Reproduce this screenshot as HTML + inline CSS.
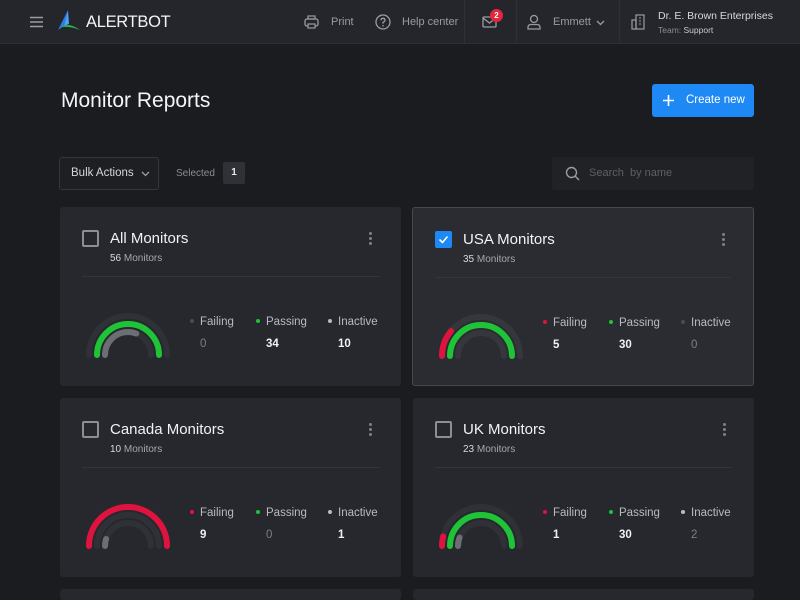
<!DOCTYPE html>
<html><head><meta charset="utf-8"><style>
*{box-sizing:border-box;margin:0;padding:0}
html{width:800px;height:600px;overflow:hidden}
body{width:800px;height:600px;overflow:hidden;background:#1a1c20;font-family:"Liberation Sans",sans-serif;color:#e8e9eb;position:relative}
.hdr{position:absolute;left:0;top:0;width:800px;height:44px;background:#24262b;border-bottom:1px solid #2d2f34}
.abs{position:absolute}
.sep{position:absolute;top:0;width:1px;height:44px;background:#2e3035}
.muted{color:#9a9ca1}
.card{position:absolute;width:341px;height:179px;background:#26282d;border-radius:3px}
.card.sel{border:1px solid #45484e;background:#2a2c31}
.cb{position:absolute;left:22px;top:23px;width:17px;height:17px;border:2px solid #8c8e93;border-radius:2px}
.cb.on{background:#1e88f5;border-color:#1e88f5}
.title{position:absolute;left:50px;top:23px;font-size:15px;color:#f2f3f5}
.sub{position:absolute;left:50px;top:46px;font-size:10px;color:#a6a8ad}
.sub b{color:#d8d9dc;font-weight:normal}
.div{position:absolute;left:22px;right:22px;top:69px;height:1px;background:#33353a}
.dots{position:absolute;right:28px;top:25px;width:3px}
.dots i{display:block;width:3px;height:3px;border-radius:50%;background:#7d8085;margin-bottom:2px}
.g{position:absolute;left:24px;top:92px}
.st{position:absolute;top:109px;font-size:11.5px;color:#b9bbbf}
.st i{display:inline-block;width:4px;height:4px;border-radius:50%;margin-right:6px;vertical-align:middle;position:relative;top:-1px}
.val{position:absolute;top:22px;font-size:11.5px;font-weight:bold;color:#f0f1f3;left:10px}
.val.z{color:#7b7e83;font-weight:normal}
</style></head><body>
<div class="hdr">
<svg class="abs" style="left:30px;top:16px" width="14" height="12"><path d="M0 1.5h13M0 6h13M0 10.5h13" stroke="#9a9ca1" stroke-width="1.5"/></svg>
<svg class="abs" style="left:56px;top:10px" width="26" height="22"><path d="M12 0L2 20 8 16Z" fill="#2a7de1"/><path d="M12 0L8 16 13 14Z" fill="#4da0ff"/><path d="M5 17Q13 12 24 20Q14 16 5 17Z" fill="#2bbf4a"/></svg>
<div class="abs" style="left:86px;top:13px;font-size:16.5px;color:#f4f4f5;letter-spacing:-0.3px">ALERTBOT</div>
<svg class="abs" style="left:304px;top:15px" width="15" height="14"><rect x="1" y="4" width="13" height="7" rx="2" fill="none" stroke="#9a9ca1" stroke-width="1.3"/><rect x="4" y="1" width="7" height="3" fill="none" stroke="#9a9ca1" stroke-width="1.2"/><rect x="4" y="9" width="7" height="4" fill="#24262b" stroke="#9a9ca1" stroke-width="1.2"/></svg>
<div class="abs muted" style="left:331px;top:16px;font-size:11px">Print</div>
<svg class="abs" style="left:375px;top:14px" width="16" height="16"><circle cx="8" cy="8" r="7" fill="none" stroke="#9a9ca1" stroke-width="1.3"/><path d="M6 6.3Q6 4.3 8 4.3T10 6.3Q10 7.5 8 8.3V9.6" fill="none" stroke="#9a9ca1" stroke-width="1.3"/><circle cx="8" cy="11.7" r=".8" fill="#9a9ca1"/></svg>
<div class="abs muted" style="left:402px;top:16px;font-size:11px">Help center</div>
<div class="sep" style="left:464px"></div>
<svg class="abs" style="left:482px;top:16px" width="15" height="12"><rect x="1" y="1" width="13" height="10" rx="1" fill="none" stroke="#9a9ca1" stroke-width="1.3"/><path d="M1 2l6.5 5 6.5-5" fill="none" stroke="#9a9ca1" stroke-width="1.3"/></svg>
<div class="abs" style="left:490px;top:9px;width:13px;height:13px;border-radius:50%;background:#e3263f;font-size:8px;font-weight:bold;text-align:center;line-height:13px;color:#fff">2</div>
<div class="sep" style="left:516px"></div>
<svg class="abs" style="left:527px;top:14px" width="14" height="16"><circle cx="7" cy="5" r="3.5" fill="none" stroke="#9a9ca1" stroke-width="1.3"/><path d="M1 15v-1.5Q1 10.5 4 10.5h6Q13 10.5 13 13.5V15Z" fill="none" stroke="#9a9ca1" stroke-width="1.3"/></svg>
<div class="abs muted" style="left:553px;top:16px;font-size:11px">Emmett</div>
<svg class="abs" style="left:596px;top:20px" width="9" height="6"><path d="M1 1l3.5 3.5L8 1" fill="none" stroke="#9a9ca1" stroke-width="1.3"/></svg>
<div class="sep" style="left:619px"></div>
<svg class="abs" style="left:631px;top:14px" width="14" height="16"><rect x="5" y="1" width="8" height="14" fill="none" stroke="#9a9ca1" stroke-width="1.2"/><rect x="1" y="6" width="4" height="9" fill="none" stroke="#9a9ca1" stroke-width="1.2"/><path d="M8 4h2M8 7h2M8 10h2" stroke="#9a9ca1"/></svg>
<div class="abs" style="left:658px;top:10px;font-size:10.5px;color:#d8d9dc">Dr. E. Brown Enterprises</div>
<div class="abs" style="left:658px;top:25px;font-size:8.5px;color:#8a8c91">Team: <span style="color:#c8c9cc">Support</span></div>
</div>

<div class="abs" style="left:61px;top:89px;font-size:21px;color:#f4f5f6">Monitor Reports</div>
<div class="abs" style="left:652px;top:84px;width:102px;height:33px;background:#1e88f5;border-radius:3px"></div>
<svg class="abs" style="left:662px;top:94px" width="13" height="13"><path d="M6.5 1v11M1 6.5h11" stroke="#fff" stroke-width="1.6"/></svg>
<div class="abs" style="left:686px;top:94px;font-size:11.5px;color:#fff">Create new</div>

<div class="abs" style="left:59px;top:157px;width:100px;height:33px;border:1px solid #34363b;border-radius:3px;background:#1d1f23"></div>
<div class="abs" style="left:71px;top:167px;font-size:11.5px;color:#d6d7da">Bulk Actions</div>
<svg class="abs" style="left:141px;top:171px" width="9" height="6"><path d="M1 1l3.5 3.5L8 1" fill="none" stroke="#9a9ca1" stroke-width="1.3"/></svg>
<div class="abs" style="left:176px;top:168px;font-size:10px;color:#8a8c91">Selected</div>
<div class="abs" style="left:223px;top:162px;width:22px;height:22px;background:#2f3136;border-radius:2px;font-size:10px;font-weight:bold;text-align:center;line-height:22px">1</div>
<div class="abs" style="left:552px;top:157px;width:202px;height:33px;background:#202226;border-radius:3px"></div>
<svg class="abs" style="left:565px;top:166px" width="15" height="15"><circle cx="6.5" cy="6.5" r="5" fill="none" stroke="#9a9ca1" stroke-width="1.4"/><path d="M10 10l4 4" stroke="#9a9ca1" stroke-width="1.4"/></svg>
<div class="abs" style="left:589px;top:167px;font-size:11px;color:#5d6065">Search&nbsp; by name</div>

<!-- Card 1 -->
<div class="card" style="left:60px;top:207px">
<div class="cb"></div><div class="title">All Monitors</div><div class="sub"><b>56</b> Monitors</div><div class="dots" style="right:29px"><i></i><i></i><i></i></div><div class="div"></div>
<svg class="g" width="90" height="64"><g fill="none" stroke-width="6" stroke-linecap="round">
<path d="M5 56A39 39 0 0 1 83 56" stroke="#2f3136"/><path d="M13 56A31 31 0 0 1 75 56" stroke="#2f3136"/><path d="M21 56A23 23 0 0 1 67 56" stroke="#2f3136"/>
<path d="M13 56A31 31 0 0 1 75 56" stroke="#1ec337" pathLength="100"/>
<path d="M21 56A23 23 0 0 1 67 56" stroke="#6b6e73" pathLength="100" stroke-dasharray="62 200"/></g></svg>
<div class="st" style="left:130px"><i style="background:#4a4c51"></i>Failing<div class="val z">0</div></div>
<div class="st" style="left:196px"><i style="background:#1ec337"></i>Passing<div class="val">34</div></div>
<div class="st" style="left:268px"><i style="background:#b9bbbf"></i>Inactive<div class="val">10</div></div>
</div>

<!-- Card 2 -->
<div class="card sel" style="left:412px;top:207px;width:342px">
<div class="cb on"><svg width="13" height="13" style="position:absolute;left:0;top:0"><path d="M2.5 6.5l3 3 5-6" fill="none" stroke="#fff" stroke-width="1.6"/></svg></div><div class="title">USA Monitors</div><div class="sub"><b>35</b> Monitors</div><div class="dots"><i></i><i></i><i></i></div><div class="div"></div>
<svg class="g" width="90" height="64"><g fill="none" stroke-width="6" stroke-linecap="round">
<path d="M5 56A39 39 0 0 1 83 56" stroke="#35373c"/><path d="M13 56A31 31 0 0 1 75 56" stroke="#35373c"/><path d="M21 56A23 23 0 0 1 67 56" stroke="#35373c"/>
<path d="M5 56A39 39 0 0 1 83 56" stroke="#e0133f" pathLength="100" stroke-dasharray="22 200"/>
<path d="M13 56A31 31 0 0 1 75 56" stroke="#1ec337" pathLength="100"/></g></svg>
<div class="st" style="left:130px"><i style="background:#e0133f"></i>Failing<div class="val">5</div></div>
<div class="st" style="left:196px"><i style="background:#1ec337"></i>Passing<div class="val">30</div></div>
<div class="st" style="left:268px"><i style="background:#4a4c51"></i>Inactive<div class="val z">0</div></div>
</div>

<!-- Card 3 -->
<div class="card" style="left:60px;top:398px">
<div class="cb"></div><div class="title">Canada Monitors</div><div class="sub"><b>10</b> Monitors</div><div class="dots" style="right:29px"><i></i><i></i><i></i></div><div class="div"></div>
<svg class="g" width="90" height="64"><g fill="none" stroke-width="6" stroke-linecap="round">
<path d="M5 56A39 39 0 0 1 83 56" stroke="#2f3136"/><path d="M13 56A31 31 0 0 1 75 56" stroke="#2f3136"/><path d="M21 56A23 23 0 0 1 67 56" stroke="#2f3136"/>
<path d="M5 56A39 39 0 0 1 83 56" stroke="#e0133f" pathLength="100"/>
<path d="M21 56A23 23 0 0 1 67 56" stroke="#6b6e73" pathLength="100" stroke-dasharray="10 200"/></g></svg>
<div class="st" style="left:130px"><i style="background:#e0133f"></i>Failing<div class="val">9</div></div>
<div class="st" style="left:196px"><i style="background:#1ec337"></i>Passing<div class="val z">0</div></div>
<div class="st" style="left:268px"><i style="background:#b9bbbf"></i>Inactive<div class="val">1</div></div>
</div>

<!-- Card 4 -->
<div class="card" style="left:413px;top:398px">
<div class="cb"></div><div class="title">UK Monitors</div><div class="sub"><b>23</b> Monitors</div><div class="dots"><i></i><i></i><i></i></div><div class="div"></div>
<svg class="g" width="90" height="64"><g fill="none" stroke-width="6" stroke-linecap="round">
<path d="M5 56A39 39 0 0 1 83 56" stroke="#2f3136"/><path d="M13 56A31 31 0 0 1 75 56" stroke="#2f3136"/><path d="M21 56A23 23 0 0 1 67 56" stroke="#2f3136"/>
<path d="M5 56A39 39 0 0 1 83 56" stroke="#e0133f" pathLength="100" stroke-dasharray="8 200"/>
<path d="M13 56A31 31 0 0 1 75 56" stroke="#1ec337" pathLength="100"/>
<path d="M21 56A23 23 0 0 1 67 56" stroke="#6b6e73" pathLength="100" stroke-dasharray="12 200"/></g></svg>
<div class="st" style="left:130px"><i style="background:#e0133f"></i>Failing<div class="val">1</div></div>
<div class="st" style="left:196px"><i style="background:#1ec337"></i>Passing<div class="val">30</div></div>
<div class="st" style="left:268px"><i style="background:#b9bbbf"></i>Inactive<div class="val z">2</div></div>
</div>

<div class="card" style="left:60px;top:589px;height:11px"></div>
<div class="card" style="left:413px;top:589px;height:11px"></div>
</body></html>
